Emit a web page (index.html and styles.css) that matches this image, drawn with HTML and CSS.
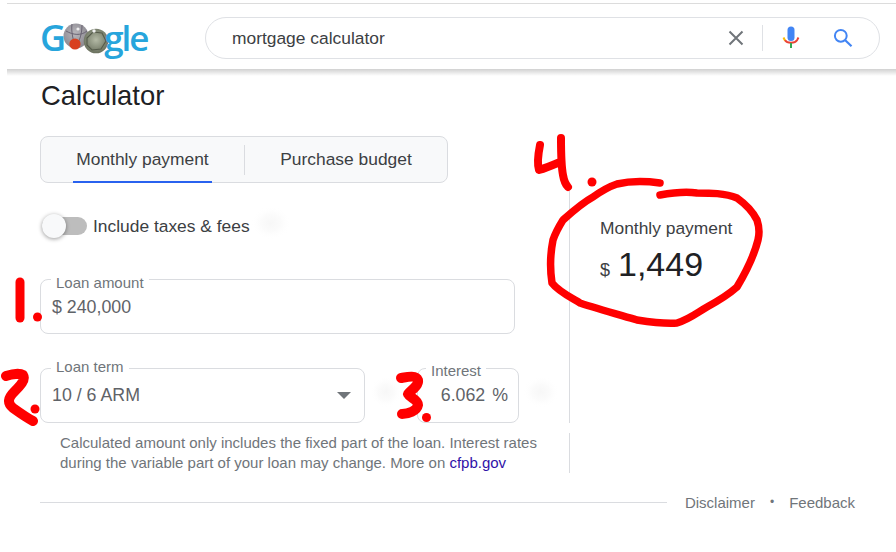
FILE: index.html
```html
<!DOCTYPE html>
<html lang="en">
<head>
<meta charset="utf-8">
<title>mortgage calculator</title>
<link rel="stylesheet" href="styles.css">
</head>
<body>
<div class="page">
  <header class="header">
    <div class="logo">
      <span class="logo-g">G</span>
      <svg class="logo-balls" viewBox="0 0 46 32" width="46" height="32" aria-hidden="true">
        <defs>
          <radialGradient id="ballA" cx="45%" cy="40%" r="65%"><stop offset="0" stop-color="#b9b7bc"/><stop offset="1" stop-color="#85838b"/></radialGradient>
          <radialGradient id="ballB" cx="50%" cy="45%" r="60%"><stop offset="0" stop-color="#b4baa6"/><stop offset="1" stop-color="#636a57"/></radialGradient>
        </defs>
        <circle cx="13" cy="13" r="12.5" fill="url(#ballA)"/>
        <path d="M3 8C10 12 18 13 24 8M9 1C8 9 10 17 13 25M19 2C19 10 17 18 12 25" fill="none" stroke="#6a6473" stroke-width="1"/>
        <circle cx="15" cy="6" r="1.6" fill="#eee"/>
        <circle cx="12" cy="21" r="5.6" fill="#d8401f"/>
        <circle cx="33" cy="18" r="12.3" fill="url(#ballB)"/>
        <path d="M24 15L30 9L39 10L43 18L38 26L29 27L24 22Z" fill="none" stroke="#555b4b" stroke-width="1.1"/>
        <circle cx="31" cy="8" r="1.7" fill="#f2f2f2"/>
      </svg>
      <span class="logo-rest">gle</span>
    </div>
    <div class="search">
      <span class="query">mortgage calculator</span>
      <svg class="icon-close" viewBox="0 0 16 16" width="16" height="16" aria-hidden="true"><path d="M1.5 1.5L14.5 14.5M14.5 1.5L1.5 14.5" stroke="#70757a" stroke-width="2" fill="none"/></svg>
      <span class="search-sep"></span>
      <svg class="icon-mic" viewBox="0 0 18 24" width="18" height="24" aria-hidden="true">
        <rect x="5.5" y="0.5" width="7" height="14.5" rx="3.5" fill="#4285f4"/>
        <path d="M1.5 11.5C2 12.5 2.3 13.5 3.2 14.5" stroke="#fbbc05" stroke-width="2" fill="none"/>
        <path d="M3 14.2C5 17.6 13 17.6 15 14.2L16.5 11.5" stroke="#ea4335" stroke-width="2" fill="none"/>
        <rect x="8" y="17" width="2" height="5" fill="#34a853"/>
      </svg>
      <svg class="icon-search" viewBox="0 0 20 20" width="20" height="20" aria-hidden="true"><circle cx="7.8" cy="7.8" r="5.9" fill="none" stroke="#4285f4" stroke-width="2"/><path d="M12 12L18.5 18.2" stroke="#4285f4" stroke-width="2.2" fill="none"/></svg>
    </div>
  </header>

  <main class="main">
    <h1 class="title">Calculator</h1>
    <div class="tabs">
      <div class="tab tab-active"><span class="tab-label">Monthly payment</span></div>
      <span class="tab-sep"></span>
      <div class="tab"><span class="tab-label">Purchase budget</span></div>
    </div>
    <div class="calc">
      <div class="form">
        <div class="toggle-row">
          <span class="switch"><span class="knob"></span></span>
          <span class="toggle-label">Include taxes &amp; fees</span>
        </div>
        <div class="field field-amount">
          <span class="field-label">Loan amount</span>
          <span class="field-value">$ 240,000</span>
        </div>
        <div class="field-row">
          <div class="field field-term">
            <span class="field-label">Loan term</span>
            <span class="field-value">10 / 6 ARM</span>
            <span class="caret"></span>
          </div>
          <div class="field field-rate">
            <span class="field-label">Interest</span>
            <span class="field-value">6.062 <span class="pct">%</span></span>
          </div>
        </div>
      </div>
      <div class="result">
        <div class="result-label">Monthly payment</div>
        <div class="result-value"><span class="currency">$</span> <span class="amount">1,449</span></div>
      </div>
    </div>
    <p class="note">Calculated amount only includes the fixed part of the loan. Interest rates during the variable part of your loan may change. More on <a class="note-link" href="#">cfpb.gov</a></p>
    <footer class="footer">
      <span class="footer-line"></span>
      <span class="footer-link">Disclaimer</span>
      <span class="footer-dot">•</span>
      <span class="footer-link">Feedback</span>
    </footer>
  </main>

  <svg class="marks" viewBox="0 0 896 552" width="896" height="552" aria-hidden="true">
    <defs>
      <radialGradient id="smudge"><stop offset="0" stop-color="#f7f7f7"/><stop offset="0.5" stop-color="#fbfbfb"/><stop offset="1" stop-color="#ffffff" stop-opacity="0"/></radialGradient>
    </defs>
    <ellipse cx="271" cy="223" rx="20" ry="17" fill="url(#smudge)"/>
    <ellipse cx="386" cy="392" rx="16" ry="16" fill="url(#smudge)"/>
    <ellipse cx="541" cy="392" rx="18" ry="16" fill="url(#smudge)"/>
    <g fill="none" stroke="#ff0000" stroke-linecap="round" stroke-linejoin="round">
      <path stroke-width="9" d="M20 282L20 318"/>
      <path stroke-width="10" d="M6 376C12 374 20 373 23 375C26 380 20 386 14 392C8 398 7 403 13 408C20 413 27 418 33 421"/>
      <path stroke-width="10" d="M401 378C407 377 416 375 418 380C419 386 410 391 408 394C410 398 418 399 418 405C417 411 408 414 402 414"/>
      <path stroke-width="8" d="M540 145C538 155 537 164 539 170C546 168 553 165 560 162M561 138C561 150 561 165 563 175C564 181 566 185 568 187"/>
      <path stroke-width="7.500" d="M660 183C645 181 630 181 617 184C608 187 600 192 593 197C582 203 572 212 563 220C558 228 555 234 553 240C550 255 550 270 552 283C558 291 570 297 580 303C598 309 620 315 637 320C650 322 665 324 677 323C690 319 698 312 707 307C718 301 728 295 737 287C746 272 754 256 758 240C760 232 759 226 757 220C752 210 744 203 737 198C725 193 710 193 697 193C683 191 671 193 660 195"/>
    </g>
    <g fill="#ff0000">
      <circle cx="37.5" cy="317" r="4.5"/>
      <circle cx="35" cy="409" r="4.5"/>
      <circle cx="426.500" cy="417.500" r="4.5"/>
      <circle cx="592" cy="182" r="4.5"/>
    </g>
  </svg>
</div>
</body>
</html>
```
FILE: styles.css
```css
* { box-sizing: border-box; }
html, body { margin: 0; padding: 0; background: #fff; }
body { font-family: "Liberation Sans", Arial, sans-serif; color: #202124; }
.page { position: relative; width: 896px; height: 552px; overflow: hidden; border-top: 1px solid transparent; }

.header {
  display: flex; align-items: center; height: 66px; margin: 2px 0 0 7px; padding: 2px 16px 0 33px;
  background: #fff; border-top: 1px solid #dcdcdc;
  position: relative;
}
.header::after { content: ""; position: absolute; left: 0; right: 0; top: 100%; height: 7px; background: linear-gradient(rgba(0,0,0,.18), rgba(0,0,0,0)); }
.logo { display: flex; align-items: center; width: 165px; height: 40px; color: #27a5dc; font-family: "Open Sans", sans-serif; font-weight: 600; font-size: 36px; line-height: 36px; }
.logo-g { margin-right: -3px; }
.logo-balls { flex: none; margin-top: 2px; }
.logo-rest { margin-left: -5px; font-size: 35px; letter-spacing: -2px; }
.search { display: flex; align-items: center; flex: 1; height: 42px; border: 1px solid #dfe1e5; border-radius: 21px; padding: 0 26px 0 26px; }
.query { flex: 1; padding-top: 2px; font-size: 17.4px; color: #3c4043; }
.icon-close { margin-right: 18px; }
.search-sep { width: 1px; height: 26px; background: #dfe1e5; margin-right: 19px; }
.icon-mic { margin-right: 33px; }

.main { padding: 0 0 0 40px; }
.title { margin: 9px 0 0 1px; font-size: 27.4px; line-height: 36px; font-weight: 400; color: #202124; }

.tabs { display: flex; align-items: center; width: 408px; height: 47px; margin-top: 22px; background: #f8f9fa; border: 1px solid #dadce0; border-radius: 8px; }
.tab { display: flex; justify-content: center; align-items: center; height: 100%; font-size: 17.4px; color: #3c4043; }
.tab:first-child { width: 203px; }
.tab:last-child { flex: 1; }
.tab-active { position: relative; }
.tab-active::after { content: ""; position: absolute; left: 32px; right: 32px; bottom: -1px; height: 2px; background: #2962ef; }
.tab-sep { width: 1px; height: 30px; background: #dadce0; }

.calc { display: flex; }
.form { flex: none; width: 530px; height: 240px; border-right: 1px solid #dadce0; }
.toggle-row { display: flex; align-items: center; height: 30px; margin-top: 28px; }
.switch { position: relative; display: block; width: 45px; height: 18px; margin-left: 2px; border-radius: 9px; background: #bdbdbd; }
.knob { position: absolute; left: 0; top: -3px; width: 24px; height: 24px; border-radius: 50%; background: #f8f9fa; box-shadow: 0 1px 4px rgba(0,0,0,.4); }
.toggle-label { margin-left: 6px; font-size: 17.4px; color: #3c4043; }

.field { position: relative; display: flex; flex: none; align-items: center; height: 55px; border: 1px solid #dadce0; border-radius: 8px; padding-left: 11px; }
.field-amount { margin-top: 38px; width: 475px; padding-top: 1px; }
.field-label { position: absolute; left: 10px; padding: 0 5px; background: #fff; font-size: 15px; line-height: 16px; color: #70757a; }
.field-amount .field-label { top: -5px; }
.field-term .field-label { top: -10px; }
.field-rate .field-label { top: -6px; left: 8px; }
.field-value { font-size: 17.8px; color: #5f6368; }
.field-row { display: flex; margin-top: 34px; }
.field-term { width: 325px; }
.caret { position: absolute; right: 13px; top: 23px; width: 0; height: 0; border-left: 7px solid transparent; border-right: 7px solid transparent; border-top: 7px solid #70757a; }
.field-rate { width: 102px; margin-left: 52px; justify-content: flex-end; padding: 0 10px 0 0; }
.pct { margin-left: 2px; }

.result { padding: 35px 0 0 30px; }
.result-label { font-size: 17.4px; line-height: 20px; color: #3c4043; }
.result-value { margin-top: 6px; display: flex; align-items: baseline; gap: 8px; color: #202124; }
.currency { font-size: 18px; color: #3c4043; }
.amount { font-size: 34px; line-height: 40px; }

.note { width: 530px; height: 40px; margin: 10px 0 0; padding: 0 20px; border-right: 1px solid #dadce0; font-size: 15px; line-height: 20px; color: #70757a; }
.note-link { color: #2f12a8; text-decoration: none; }

.footer { display: flex; align-items: center; height: 20px; margin-top: 19px; padding-right: 41px; font-size: 15px; color: #70757a; }
.footer-line { flex: 1; height: 1px; background: #dadce0; margin: 0 18px 0 0; }
.footer-dot { margin: 0 15px; font-size: 12px; }

.marks { position: absolute; left: 0; top: -1px; pointer-events: none; }
```
